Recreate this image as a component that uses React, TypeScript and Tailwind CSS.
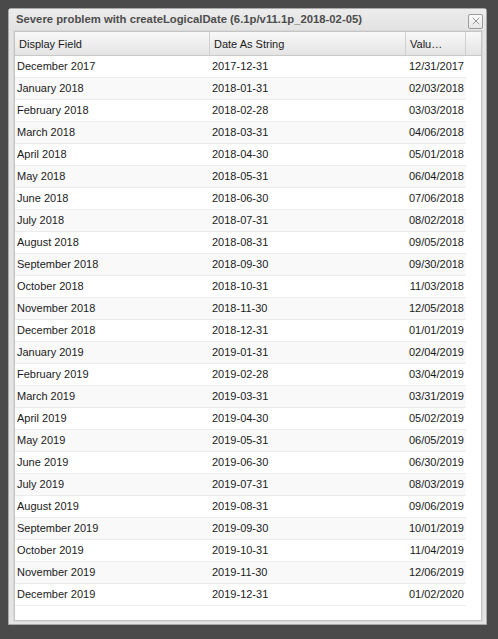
import { X } from 'lucide-react';

const ROWS: [string, string, string][] = [
  ['December 2017', '2017-12-31', '12/31/2017'],
  ['January 2018', '2018-01-31', '02/03/2018'],
  ['February 2018', '2018-02-28', '03/03/2018'],
  ['March 2018', '2018-03-31', '04/06/2018'],
  ['April 2018', '2018-04-30', '05/01/2018'],
  ['May 2018', '2018-05-31', '06/04/2018'],
  ['June 2018', '2018-06-30', '07/06/2018'],
  ['July 2018', '2018-07-31', '08/02/2018'],
  ['August 2018', '2018-08-31', '09/05/2018'],
  ['September 2018', '2018-09-30', '09/30/2018'],
  ['October 2018', '2018-10-31', '11/03/2018'],
  ['November 2018', '2018-11-30', '12/05/2018'],
  ['December 2018', '2018-12-31', '01/01/2019'],
  ['January 2019', '2019-01-31', '02/04/2019'],
  ['February 2019', '2019-02-28', '03/04/2019'],
  ['March 2019', '2019-03-31', '03/31/2019'],
  ['April 2019', '2019-04-30', '05/02/2019'],
  ['May 2019', '2019-05-31', '06/05/2019'],
  ['June 2019', '2019-06-30', '06/30/2019'],
  ['July 2019', '2019-07-31', '08/03/2019'],
  ['August 2019', '2019-08-31', '09/06/2019'],
  ['September 2019', '2019-09-30', '10/01/2019'],
  ['October 2019', '2019-10-31', '11/04/2019'],
  ['November 2019', '2019-11-30', '12/06/2019'],
  ['December 2019', '2019-12-31', '01/02/2020'],
];

export default function App() {
  return (
    <div
      className="w-[498px] h-[639px] bg-[#4a4a4a] pt-[8px] pl-[8px] text-[11px] text-[#1a1a1a]"
      style={{ fontFamily: '"Liberation Sans", Arial, sans-serif' }}
    >
      {/* Dialog window */}
      <div className="w-[479px] h-[617px] rounded-t-[3px] border border-[#a9a9a9] bg-[#e4e4e4] flex flex-col">
        {/* Title bar */}
        <div className="h-[22px] shrink-0 flex items-center justify-between pl-[7px] pr-[3px] bg-gradient-to-b from-[#ececec] to-[#e2e2e2]">
          <span className="font-bold text-[11.3px] text-[#4d4d4d] leading-none">
            Severe problem with createLogicalDate (6.1p/v11.1p_2018-02-05)
          </span>
          <button className="w-[15px] h-[15px] mt-[2px] flex items-center justify-center rounded-[2px] border border-[#9c9c9c] bg-gradient-to-b from-[#fafafa] to-[#e6e6e6]">
            <X size={12} strokeWidth={1.2} className="text-[#555]" />
          </button>
        </div>

        {/* Grid */}
        <div className="ml-[5px] mr-[4px] h-[590px] shrink-0 border border-[#c4c4c4] outline outline-1 outline-[#d8d8d8] bg-white flex flex-col">
          {/* Header */}
          <div className="flex h-[24px] shrink-0 bg-gradient-to-b from-[#f8f8f8] to-[#e4e4e4] border-b border-[#c9c9c9]">
            <div className="w-[195px] pl-[4px] pt-[1px] flex items-center border-r border-[#d0d0d0]">Display Field</div>
            <div className="w-[196px] pl-[4px] pt-[1px] flex items-center border-r border-[#d0d0d0]">Date As String</div>
            <div className="w-[60px] pl-[4px] pt-[1px] flex items-center border-r border-[#d0d0d0]">Valu…</div>
            <div className="flex-1" />
          </div>

          {/* Rows */}
          <div className="w-[451px]">
            {ROWS.map(([label, dateStr, value], i) => (
              <div
                key={label}
                className={`flex h-[22px] items-center border-b border-[#ececec] ${
                  i % 2 === 1 ? 'bg-[#f9f9f9]' : 'bg-white'
                }`}
              >
                <div className="w-[195px] pl-[2px]">{label}</div>
                <div className="w-[196px] pl-[2px]">{dateStr}</div>
                <div className="w-[60px] text-right pr-[2px]">{value}</div>
              </div>
            ))}
          </div>
        </div>
      </div>
    </div>
  );
}
